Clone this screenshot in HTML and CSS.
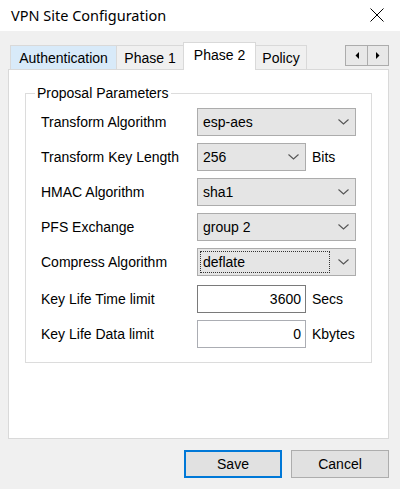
FILE: index.html
```html
<!DOCTYPE html>
<html>
<head>
<meta charset="utf-8">
<link rel="stylesheet" href="styles.css">
</head>
<body>
<div class="titlebar">
  <span class="title">VPN Site Configuration</span>
  <svg class="close" width="14" height="14" viewBox="0 0 14 14"><path d="M0.5 0.5 L13.5 13.5 M13.5 0.5 L0.5 13.5" stroke="#000" stroke-width="1" fill="none"/></svg>
</div>
<div class="client">
  <div class="tabstrip">
    <div class="tab hot w-auth">Authentication</div>
    <div class="tab w-p1">Phase 1</div>
    <div class="tab sel w-p2">Phase 2</div>
    <div class="tab w-pol">Policy</div>
    <div class="scroller">
      <div class="sbtn"><svg width="4" height="7" viewBox="0 0 4 7"><polygon points="4,0 4,7 0.5,3.5" fill="#000"/></svg></div>
      <div class="sbtn"><svg width="4" height="7" viewBox="0 0 4 7"><polygon points="0,0 0,7 3.5,3.5" fill="#000"/></svg></div>
    </div>
  </div>
  <div class="panel">
    <fieldset class="group">
      <legend>Proposal Parameters</legend>
      <div class="row">
        <span class="label">Transform Algorithm</span>
        <div class="combo wide"><span class="val">esp-aes</span><span class="arrow"><svg width="11" height="6" viewBox="0 0 11 6"><polyline points="0.5,0.5 5.5,5 10.5,0.5" fill="none" stroke="#555" stroke-width="1.1"/></svg></span></div>
      </div>
      <div class="row">
        <span class="label">Transform Key Length</span>
        <div class="combo narrow"><span class="val">256</span><span class="arrow"><svg width="11" height="6" viewBox="0 0 11 6"><polyline points="0.5,0.5 5.5,5 10.5,0.5" fill="none" stroke="#555" stroke-width="1.1"/></svg></span></div>
        <span class="unit">Bits</span>
      </div>
      <div class="row">
        <span class="label">HMAC Algorithm</span>
        <div class="combo wide"><span class="val">sha1</span><span class="arrow"><svg width="11" height="6" viewBox="0 0 11 6"><polyline points="0.5,0.5 5.5,5 10.5,0.5" fill="none" stroke="#555" stroke-width="1.1"/></svg></span></div>
      </div>
      <div class="row">
        <span class="label">PFS Exchange</span>
        <div class="combo wide"><span class="val">group 2</span><span class="arrow"><svg width="11" height="6" viewBox="0 0 11 6"><polyline points="0.5,0.5 5.5,5 10.5,0.5" fill="none" stroke="#555" stroke-width="1.1"/></svg></span></div>
      </div>
      <div class="row">
        <span class="label">Compress Algorithm</span>
        <div class="combo wide"><span class="val focus">deflate</span><span class="arrow"><svg width="11" height="6" viewBox="0 0 11 6"><polyline points="0.5,0.5 5.5,5 10.5,0.5" fill="none" stroke="#555" stroke-width="1.1"/></svg></span></div>
      </div>
      <div class="row first-edit">
        <span class="label">Key Life Time limit</span>
        <div class="edit hover">3600</div>
        <span class="unit">Secs</span>
      </div>
      <div class="row">
        <span class="label">Key Life Data limit</span>
        <div class="edit">0</div>
        <span class="unit">Kbytes</span>
      </div>
    </fieldset>
  </div>
  <div class="buttons">
    <div class="btn default">Save</div>
    <div class="btn">Cancel</div>
  </div>
</div>
</body>
</html>
```

FILE: styles.css
```css
* { box-sizing: border-box; }
html, body { margin: 0; padding: 0; }
body {
  width: 400px;
  height: 489px;
  background: #f0f0f0;
  font-family: "Liberation Sans", Arial, sans-serif;
  font-size: 14px;
  color: #000;
  overflow: hidden;
}
.titlebar {
  height: 31px;
  background: #fff;
  display: flex;
  align-items: center;
  padding: 0 16px 0 11px;
}
.title {
  font-family: "Noto Sans", "Open Sans", sans-serif;
  font-size: 14.5px;
  flex: 1;
  padding-bottom: 1px;
}
.close { display: block; margin-top: -2px; }

.client { padding: 11px 11px 0 8px; }

.tabstrip {
  display: flex;
  align-items: flex-end;
  height: 27px;
  padding-left: 2px;
}
.tab {
  height: 24px;
  border: 1px solid #d9d9d9;
  border-bottom: none;
  background: #f0f0f0;
  display: flex;
  align-items: center;
  justify-content: center;
  margin-left: -1px;
  white-space: nowrap;
  padding-top: 1px;
}
.tab:first-child { margin-left: 0; }
.tab.hot { background: #d8eaf9; }
.tab.sel {
  height: 28px;
  background: #fff;
  margin-bottom: -1px;
  position: relative;
  z-index: 1;
  padding-top: 0;
  padding-bottom: 3px;
}
.w-auth { width: 107px; }
.w-p1 { width: 68px; }
.w-p2 { width: 73px; }
.w-pol { width: 52px; }

.scroller {
  margin-left: auto;
  align-self: flex-start;
  margin-top: 3px;
  display: flex;
  border: 1px solid #acacac;
  height: 21px;
}
.sbtn {
  width: 21px;
  height: 19px;
  background: #e8e8e8;
  display: flex;
  align-items: center;
  justify-content: center;
}
.sbtn + .sbtn { border-left: 1px solid #acacac; }
.sbtn svg { display: block; }

.panel {
  height: 370px;
  background: #fff;
  border: 1px solid #d9d9d9;
  padding: 15px 16px 0 16px;
}
.group {
  margin: 0;
  border: 1px solid #dcdcdc;
  padding: 7px 15px 14px 15px;
  min-width: 0;
}
.group legend {
  padding: 0 2px;
  margin-left: -6px;
  line-height: 16px;
  font-size: 14px;
}
.row {
  display: flex;
  align-items: center;
  height: 28px;
  margin-top: 7px;
}
.row:first-of-type { margin-top: 0; }
.row.first-edit { margin-top: 9px; }
.label { width: 156px; flex: none; white-space: nowrap; }

.combo {
  height: 28px;
  background: #e5e5e5;
  border: 1px solid #acacac;
  display: flex;
  align-items: stretch;
}
.combo.wide { width: 160px; }
.combo.narrow { width: 109px; }
.combo .val {
  flex: 1;
  display: flex;
  align-items: center;
  padding-left: 5px;
  white-space: nowrap;
}
.combo .val.focus {
  margin: 2px 0 2px 2px;
  padding-left: 2px;
  border: 1px dotted #333;
}
.combo .arrow {
  width: 25px;
  flex: none;
  display: flex;
  align-items: center;
  justify-content: center;
  padding-left: 1px;
}
.combo .arrow svg { display: block; }

.edit {
  width: 109px;
  height: 28px;
  background: #fff;
  border: 1px solid #abadb3;
  text-align: right;
  padding-right: 4px;
  line-height: 26px;
}
.edit.hover { border-color: #7a7a7a; }
.unit { margin-left: 6px; white-space: nowrap; }

.buttons {
  display: flex;
  justify-content: flex-end;
  align-items: center;
  gap: 9px;
  margin-top: 11px;
}
.btn {
  width: 98px;
  height: 28px;
  background: #e1e1e1;
  border: 1px solid #adadad;
  display: flex;
  align-items: center;
  justify-content: center;
}
.btn.default { border: 2px solid #0078d7; }
```
